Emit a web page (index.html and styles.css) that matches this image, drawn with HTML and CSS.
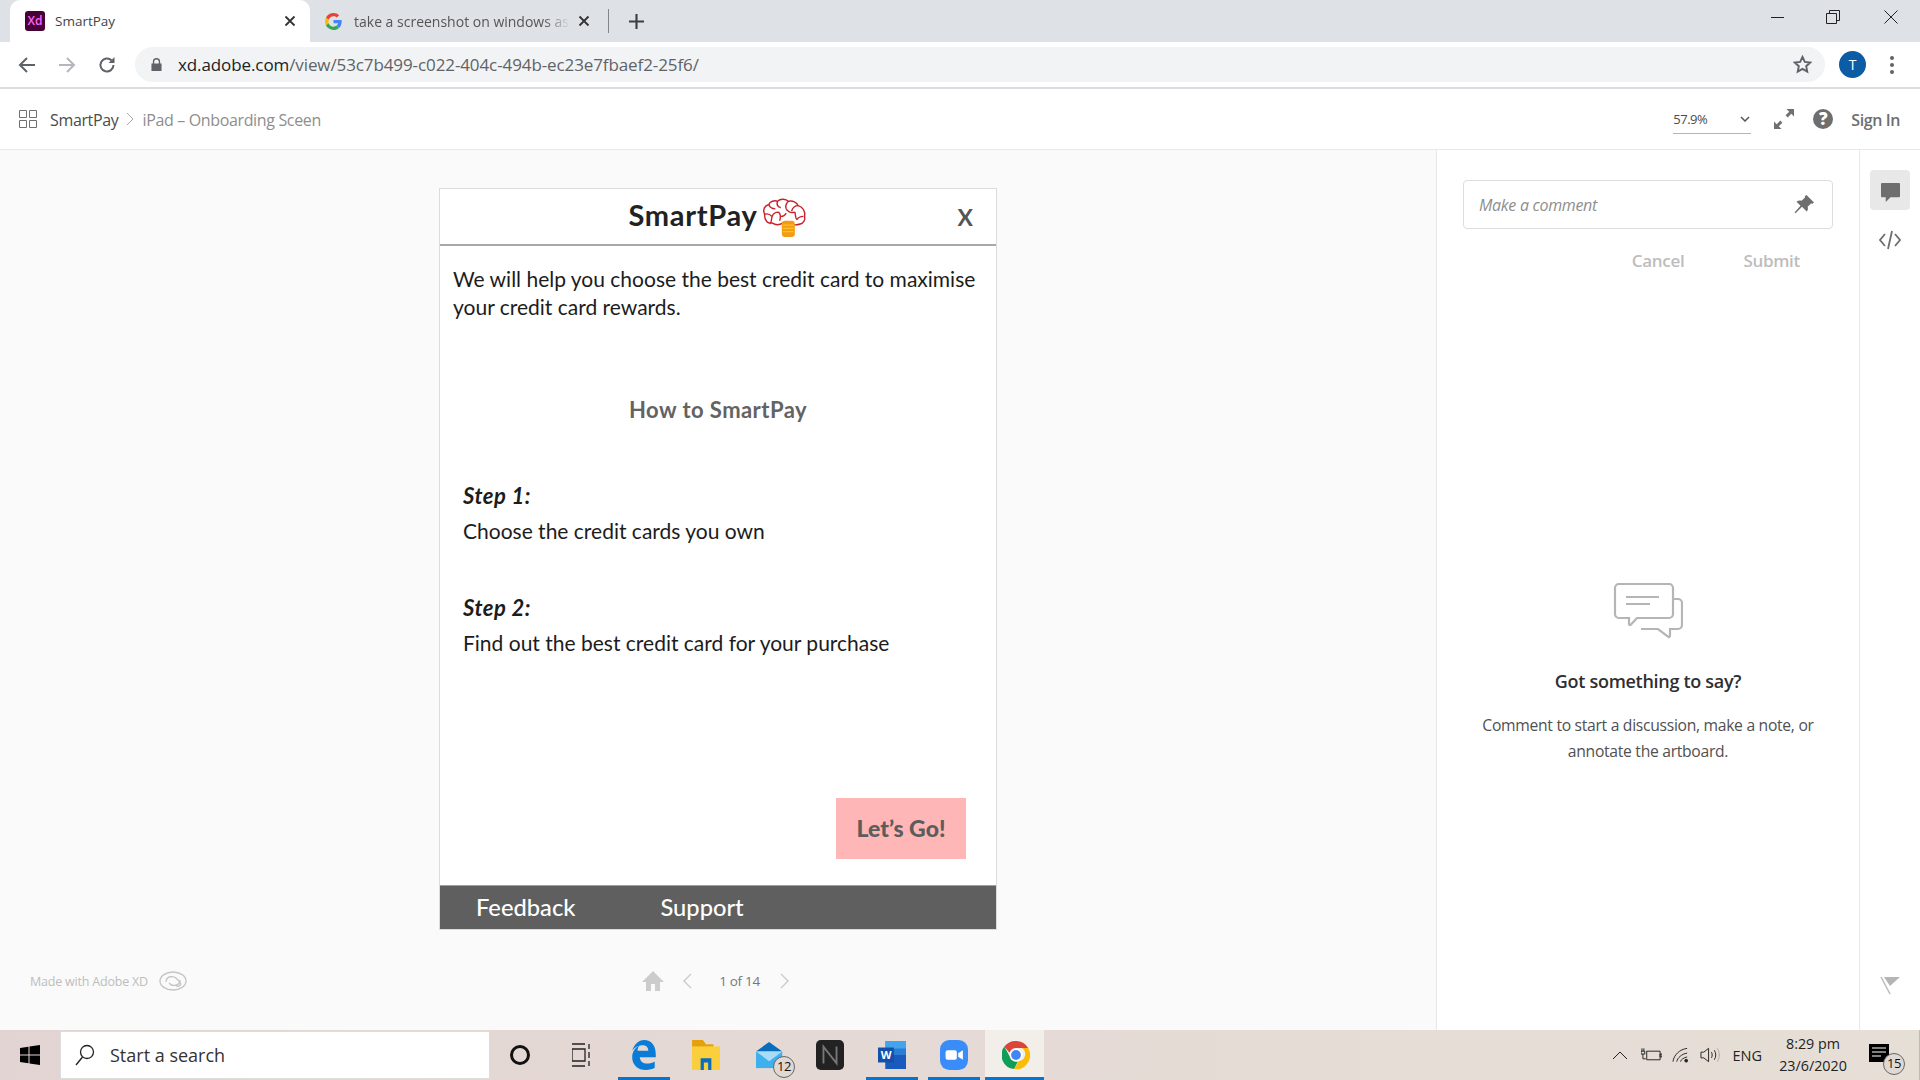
FILE: index.html
```html
<!DOCTYPE html>
<html lang="en">
<head>
    <meta charset="UTF-8">
    <title>SmartPay</title>
    <link rel="stylesheet" href="styles.css">
</head>
<body>
    <!-- browser tabs -->
    <div class="tabstrip">
        <div class="tab active">
            <span class="xd-icon">Xd</span>
            <span class="tab-title">SmartPay</span>
            <svg class="tab-close" viewBox="0 0 12 12"><path d="M1.5 1.5l9 9M10.5 1.5l-9 9"/></svg>
        </div>
        <div class="tab">
            <svg class="g-icon" viewBox="0 0 48 48">
                <path fill="#ea4335" d="M24 9.5c3.5 0 6.700 1.300 9.100 3.500l6.800-6.800C35.800 2.400 30.200 0 24 0 14.600 0 6.500 5.400 2.600 13.200l7.900 6.100C12.400 13.700 17.700 9.500 24 9.500z"/>
                <path fill="#4285f4" d="M47 24.500c0-1.600-.1-3.100-.4-4.500H24v9h12.900c-.6 3-2.200 5.500-4.700 7.200l7.600 5.900C44.300 37.900 47 31.800 47 24.500z"/>
                <path fill="#fbbc05" d="M10.500 28.700c-.5-1.500-.8-3-.8-4.700s.3-3.200.8-4.700l-7.900-6.100C.9 16.500 0 20.100 0 24s.9 7.500 2.600 10.800l7.900-6.100z"/>
                <path fill="#34a853" d="M24 48c6.500 0 11.900-2.100 15.800-5.800l-7.600-5.900c-2.100 1.400-4.900 2.300-8.200 2.300-6.300 0-11.600-4.200-13.500-9.900l-7.900 6.100C6.500 42.600 14.600 48 24 48z"/>
            </svg>
            <span class="tab-title fade">take a screenshot on windows as</span>
            <svg class="tab-close" viewBox="0 0 12 12"><path d="M1.5 1.5l9 9M10.5 1.5l-9 9"/></svg>
        </div>
        <span class="tab-sep"></span>
        <svg class="tab-new" viewBox="0 0 14 14"><path d="M7 0v14M0 7h14"/></svg>
        <div class="win-controls">
            <svg viewBox="0 0 14 14"><path d="M0 7.500h13"/></svg>
            <svg viewBox="0 0 14 14"><path d="M.5 3.500h10v10H.5zM3.500 3.500V.5h10v10h-3"/></svg>
            <svg viewBox="0 0 14 14"><path d="M.5.5l13 13M13.500.5l-13 13"/></svg>
        </div>
    </div>

    <!-- address bar -->
    <div class="toolbar">
        <svg class="nav-icon" viewBox="0 0 18 18"><path d="M17 9H2M9 2L2 9l7 7"/></svg>
        <svg class="nav-icon off" viewBox="0 0 18 18"><path d="M1 9h15M9 2l7 7-7 7"/></svg>
        <svg class="nav-icon" viewBox="0 0 18 18"><path d="M15.500 9a6.500 6.500 0 1 1-2-4.700"/><path class="solid" d="M16.500 1v6h-6z"/></svg>
        <div class="omnibox">
            <svg class="lock" viewBox="0 0 12 14"><path d="M2 6V4a4 4 0 0 1 8 0v2h1.500v8H.5V6zm1.500 0h5V4a2.500 2.500 0 0 0-5 0z"/></svg>
            <span class="url"><b>xd.adobe.com</b>/view/53c7b499-c022-404c-494b-ec23e7fbaef2-25f6/</span>
            <svg class="star" viewBox="0 0 18 18"><path d="M9 1.800l2.200 4.700 5.100.6-3.800 3.500 1 5.100L9 13.200l-4.500 2.500 1-5.100-3.800-3.500 5.100-.6z"/></svg>
        </div>
        <span class="avatar">T</span>
        <span class="kebab"><i></i><i></i><i></i></span>
    </div>

    <!-- xd header -->
    <div class="xdbar">
        <svg class="grid-icon" viewBox="0 0 18 18"><path d="M.5.5h7v7h-7zM10.500.5h7v7h-7zM.5 10.500h7v7h-7zM10.500 10.500h7v7h-7z"/></svg>
        <span class="crumb">SmartPay</span>
        <svg class="crumb-sep" viewBox="0 0 8 14"><path d="M1 1l6 6-6 6"/></svg>
        <span class="crumb dim">iPad – Onboarding Sceen</span>
        <div class="zoom-select">
            <span>57.9%</span>
            <svg viewBox="0 0 10 6"><path d="M1 1l4 4 4-4"/></svg>
        </div>
        <svg class="expand" viewBox="0 0 20 20"><path class="solid" d="M12.500 0H20v7.500l-2.700-2.700-3.600 3.600-2.100-2.100 3.600-3.600zM7.500 20H0v-7.500l2.700 2.700 3.600-3.600 2.100 2.100-3.600 3.600z"/></svg>
        <span class="help">?</span>
        <span class="signin">Sign In</span>
    </div>

    <div class="main">
        <!-- artboard -->
        <div class="stage">
            <div class="artboard">
                <div class="board-head">
                    <span class="logo-text">SmartPay</span>
                    <svg class="brain" viewBox="0 0 42 36">
                        <path d="M3 15c-2-4 0-8 4-9 1-3 5-4 8-3 3-3 8-2 10 0 4-1 8 1 9 4 4 1 7 5 6 10 1 3-1 6-4 7-3 1-6 1-8 0-3 1-6 0-8-1-3 2-7 2-10 0-4 1-7-2-7-8z"/>
                        <path d="M7 6c1 3 3 4 6 4M15 3c-1 3 0 5 3 6M25 3c-2 2-3 4-2 7M34 7c-3 0-5 2-6 5M3 15c3-1 5 0 7 2M10 17c1-3 3-4 6-4M16 13c2 2 2 5 1 8M23 10c2 3 5 4 8 3M31 13c1 3 0 5 2 7M39 17c-3 0-5 1-6 3M10 17c-1 3 0 5-2 7M23 14c-1 2-3 3-5 3"/>
                        <rect class="coin" x="19" y="21" width="12" height="15" rx="3"/>
                        <path class="coin-line" d="M20 25h10M20 28h10M20 31h10"/>
                    </svg>
                    <span class="board-close">X</span>
                </div>
                <div class="board-body">
                    <p class="intro">We will help you choose the best credit card to maximise your credit card rewards.</p>
                    <h2 class="how">How to SmartPay</h2>
                    <div class="step">
                        <em>Step 1:</em>
                        <span>Choose the credit cards you own</span>
                    </div>
                    <div class="step">
                        <em>Step 2:</em>
                        <span>Find out the best credit card for your purchase</span>
                    </div>
                    <div class="cta-row"><span class="cta">Let’s Go!</span></div>
                </div>
                <div class="board-foot">
                    <span class="foot-first">Feedback</span>
                    <span>Support</span>
                </div>
            </div>

            <div class="stage-foot">
                <div class="made">
                    <span>Made with Adobe XD</span>
                    <svg viewBox="0 0 28 20"><ellipse cx="14" cy="10" rx="13" ry="9"/><path d="M7 11c0-6 8-7 11-3l3 3c2 3-1 5-4 4M21 9c0 6-8 7-11 3"/></svg>
                </div>
                <div class="pager">
                    <svg class="home" viewBox="0 0 22 20"><path d="M11 0l11 11h-4v9h-5v-7H9v7H4v-9H0z"/></svg>
                    <svg class="arrow" viewBox="0 0 10 18"><path d="M9 1L1 9l8 8"/></svg>
                    <span class="count">1 of 14</span>
                    <svg class="arrow" viewBox="0 0 10 18"><path d="M1 1l8 8-8 8"/></svg>
                </div>
            </div>
        </div>

        <!-- comments -->
        <div class="comments">
            <div class="comment-box">
                <span>Make a comment</span>
                <svg viewBox="0 0 20 20"><path d="M12.500 0L20 7.500l-1.500 1.200-1.500-.3-3.300 3.300c.5 2 .2 3.500-1 4.800L8 11.800l-6.500 6.500-1-.8 6-6.800L2.500 6.800C4 5.500 5.800 5.300 7.600 5.800L11 2.500l-.2-1.300z"/></svg>
            </div>
            <div class="comment-actions">
                <span>Cancel</span>
                <span>Submit</span>
            </div>
            <div class="empty">
                <svg viewBox="0 0 70 56">
                    <path d="M6 1h50a4 4 0 0 1 4 4v26a4 4 0 0 1-4 4H24L18 41.500c-1 1-2 .5-2-.5v-6H6a4 4 0 0 1-4-4V5a4 4 0 0 1 4-4z"/>
                    <path d="M60 16h5a4 4 0 0 1 4 4v22a4 4 0 0 1-4 4h-8v6.500c0 1.500-1 2-2 1L45 46H28"/>
                    <path d="M13 14h33M13 21h24"/>
                </svg>
                <h3>Got something to say?</h3>
                <p>Comment to start a discussion, make a note, or annotate the artboard.</p>
            </div>
        </div>

        <div class="rail">
            <span class="rail-btn">
                <svg viewBox="0 0 20 20"><path d="M1 0h18a1 1 0 0 1 1 1v13a1 1 0 0 1-1 1H10l-5 5v-5H1a1 1 0 0 1-1-1V1a1 1 0 0 1 1-1z"/></svg>
            </span>
            <svg class="code" viewBox="0 0 22 20"><path d="M6 4l-5 6 5 6M16 4l5 6-5 6M13 1L9 19"/></svg>
            <svg class="flag" viewBox="0 0 20 20"><path class="solid" d="M4 1h16l-10 9z"/><path d="M1 1l9 17"/></svg>
        </div>
    </div>

    <!-- windows taskbar -->
    <div class="taskbar">
        <svg class="start" viewBox="0 0 20 20"><path d="M0 3l8.500-1.200v7.700H0zM9.500 1.600L20 0v9.500H9.500zM0 10.500h8.500v7.700L0 17zM9.500 10.500H20V20L9.500 18.400z"/></svg>
        <div class="search">
            <svg viewBox="0 0 20 22"><circle cx="12" cy="8" r="6.500"/><path d="M7.500 13L1 21"/></svg>
            <span>Start a search</span>
        </div>
        <div class="task-icons">
            <span class="task"><span class="cortana"></span></span>
            <span class="task">
                <svg class="taskview" viewBox="0 0 20 24"><path d="M0 1h13M0 23h13M0 6h13v12H0zM17 1v5M17 9v6M17 18v5"/></svg>
            </span>
            <span class="task on">
                <svg viewBox="0 0 24 28"><path fill="#0a7bd6" d="M12 0c7 0 11 5 11 14v2H8c.5 4 3 6 7 6 2.500 0 5-.7 7-2v6c-2 1.300-5 2-8 2C6 28 1 23 1 16 1 11 4 7 8 5c-1 1-2 3-2 5h10c0-3-2-5-5-5-3 0-7 1-10 5C3 4 7 0 12 0z"/></svg>
            </span>
            <span class="task">
                <svg viewBox="0 0 26 28"><path fill="#e5a00d" d="M0 0h10l3 4h7v6H0z"/><path fill="#fbcf3c" d="M0 6h26v22H0z"/><path fill="#0a6cbd" d="M8 28V17h10v11h-3v-7h-4v7z"/></svg>
            </span>
            <span class="task">
                <svg class="mail" viewBox="0 0 32 30"><path fill="#0a6cbd" d="M15 0l15 11H0z"/><path fill="#3fb0ee" d="M0 11h30v19H0z"/><path fill="#a9dcf7" d="M0 11l15 11 15-11z"/></svg>
                <span class="badge">12</span>
            </span>
            <span class="task">
                <svg viewBox="0 0 30 32"><rect width="30" height="32" rx="5" fill="#222"/><path d="M8 25V7l14 18V7" fill="none" stroke="#777" stroke-width="2"/></svg>
            </span>
            <span class="task on">
                <svg viewBox="0 0 30 30"><path fill="#2b7cd3" d="M8 0h22v30H8z"/><path fill="#185abd" d="M8 15h22v15H8z"/><path fill="#41a5ee" d="M8 0h22v8H8z"/><path fill="#1350a8" d="M0 7h17v16H0z"/><text x="3" y="19" class="word-w">W</text></svg>
            </span>
            <span class="task on">
                <svg viewBox="0 0 30 32"><rect width="30" height="32" rx="10" fill="#3a8df8"/><rect x="6" y="11" width="12" height="10" rx="2" fill="#fff"/><path d="M19.500 14l5-3v10l-5-3z" fill="#fff"/></svg>
            </span>
            <span class="task on chrome">
                <svg viewBox="0 0 30 30">
                    <path fill="#db4437" d="M15 0a15 15 0 0 1 13 7.500H15a7.500 7.500 0 0 0-7 5L2.500 6A15 15 0 0 1 15 0z"/>
                    <path fill="#0f9d58" d="M2.500 6L8 16a7.500 7.500 0 0 0 9 6l-4 8A15 15 0 0 1 2.500 6z"/>
                    <path fill="#fbbc05" d="M28 7.500A15 15 0 0 1 13 30l5-8.500a7.500 7.500 0 0 0 3-14z"/>
                    <circle cx="15" cy="15" r="6" fill="#4285f4" stroke="#fff" stroke-width="1.500"/>
                </svg>
            </span>
        </div>
        <div class="tray">
            <svg class="tray-chev" viewBox="0 0 16 9"><path d="M1 8l7-7 7 7"/></svg>
            <svg class="tray-bat" viewBox="0 0 22 14"><path d="M6 3h14v9H6zM20 6h2v3h-2zM3 0v3M1 0v3M0 3h4v3H0zM2 6v5h3"/></svg>
            <svg class="tray-wifi" viewBox="0 0 18 16"><path d="M1 15C2 8 8 2 16 1M5 15c1-4 5-8 11-9M9 15c.5-2 3-4 7-5"/><circle class="solid" cx="15" cy="14" r="1.500"/></svg>
            <svg class="tray-vol" viewBox="0 0 22 16"><path d="M1 5h3l5-4v14l-5-4H1zM12 5c1 2 1 4 0 6M15 3c2 3 2 7 0 10"/><path class="faint" d="M18 1c3 4 3 10 0 14"/></svg>
            <span class="tray-lang">ENG</span>
            <div class="clock">
                <span>8:29 pm</span>
                <span>23/6/2020</span>
            </div>
            <span class="notify">
                <svg viewBox="0 0 20 18"><path d="M0 0h20v18H0z"/><path class="note-line" d="M3 4h14M3 8h14M3 12h9"/></svg>
                <span class="badge">15</span>
            </span>
        </div>
    </div>
</body>
</html>
```

FILE: styles.css
```css
* {
    margin: 0;
    padding: 0;
    box-sizing: border-box;
}

body {
    width: 1920px;
    height: 1080px;
    overflow: hidden;
    display: flex;
    flex-direction: column;
    background: #fff;
    font-family: 'Open Sans', 'Noto Sans', sans-serif;
    color: #333;
}

svg {
    display: block;
    flex: none;
}

/* tabs */
.tabstrip {
    height: 42px;
    flex: none;
    display: flex;
    align-items: center;
    padding-left: 10px;
    background: #dee1e6;
}

.tab {
    width: 296px;
    height: 42px;
    display: flex;
    align-items: center;
    padding: 0 16px 0 15px;
    font-size: 13.5px;
    color: #555;
}

.tab.active {
    width: 300px;
    padding: 0 14px 0 15px;
    background: #fff;
    border-radius: 10px 10px 0 0;
    color: #444;
}

.xd-icon {
    width: 20px;
    height: 20px;
    margin-right: 10px;
    flex: none;
    border-radius: 3px;
    background: #470137;
    color: #ff61f6;
    font-size: 12px;
    font-weight: 600;
    line-height: 20px;
    text-align: center;
}

.g-icon {
    width: 17px;
    height: 17px;
    margin-right: 12px;
}

.tab-title {
    flex: 1;
    white-space: nowrap;
    overflow: hidden;
}

.tab-title.fade {
    font-size: 14px;
    -webkit-mask-image: linear-gradient(90deg, #000 88%, transparent);
    mask-image: linear-gradient(90deg, #000 88%, transparent);
}

.tab-close {
    width: 12px;
    height: 12px;
    margin-left: 8px;
    fill: none;
    stroke: #333;
    stroke-width: 1.8;
}

.tab-sep {
    width: 1px;
    height: 24px;
    margin-left: 2px;
    background: #80868b;
}

.tab-new {
    width: 15px;
    height: 15px;
    margin-left: 20px;
    fill: none;
    stroke: #3c4043;
    stroke-width: 2;
}

.win-controls {
    margin-left: auto;
    display: flex;
    gap: 44px;
    padding: 0 22px 8px 0;
}

.win-controls svg {
    width: 14px;
    height: 14px;
    fill: none;
    stroke: #222;
    stroke-width: 1;
}

.win-controls svg:first-child {
    margin-right: -3px;
}

/* address bar */
.toolbar {
    height: 47px;
    flex: none;
    display: flex;
    align-items: center;
    padding-left: 18px;
    background: #fff;
    border-bottom: 2px solid #dadce0;
}

.nav-icon {
    width: 18px;
    height: 18px;
    margin-right: 22px;
    fill: none;
    stroke: #5f6368;
    stroke-width: 2;
}

.nav-icon.off {
    stroke: #b4b7bb;
}

.nav-icon .solid {
    fill: #5f6368;
    stroke: none;
}

.omnibox {
    width: 1690px;
    height: 35px;
    margin-left: -3px;
    display: flex;
    align-items: center;
    padding: 0 13px 0 16px;
    background: #f1f3f4;
    border-radius: 18px;
}

.lock {
    width: 11px;
    height: 13px;
    margin-right: 16px;
    fill: #5f6368;
}

.url {
    flex: 1;
    font-size: 17px;
    letter-spacing: -.1px;
    color: #5f6368;
}

.url b {
    font-weight: 400;
    color: #202124;
}

.star {
    width: 19px;
    height: 19px;
    fill: none;
    stroke: #5f6368;
    stroke-width: 1.8;
}

.avatar {
    width: 27px;
    height: 27px;
    margin-left: 14px;
    border-radius: 50%;
    background: #0b5ca5;
    color: #fff;
    font-size: 14px;
    line-height: 27px;
    text-align: center;
}

.kebab {
    margin-left: 24px;
    display: flex;
    flex-direction: column;
    gap: 3px;
}

.kebab i {
    width: 4px;
    height: 4px;
    border-radius: 50%;
    background: #5f6368;
}

/* xd header */
.xdbar {
    height: 61px;
    flex: none;
    display: flex;
    align-items: center;
    padding: 0 20px 0 19px;
    background: #fff;
    border-bottom: 1px solid #e8e8e8;
}

.grid-icon {
    width: 18px;
    height: 18px;
    margin-right: 13px;
    fill: none;
    stroke: #707070;
}

.crumb {
    padding-top: 2px;
    font-size: 16px;
    letter-spacing: -.35px;
    color: #4b4b4b;
}

.crumb.dim {
    color: #8e8e8e;
}

.crumb-sep {
    width: 8px;
    height: 14px;
    margin: 0 8px;
    fill: none;
    stroke: #aaa;
}

.zoom-select {
    width: 78px;
    height: 30px;
    margin-left: auto;
    display: flex;
    align-items: center;
    justify-content: space-between;
    padding-right: 1px;
    border-bottom: 1px solid #b5b5b5;
    font-size: 13px;
    letter-spacing: -.5px;
    color: #4b4b4b;
}

.zoom-select svg {
    width: 10px;
    height: 6px;
    fill: none;
    stroke: #555;
    stroke-width: 1.5;
}

.expand {
    width: 20px;
    height: 20px;
    margin-left: 23px;
}

.solid {
    fill: #707070;
}

.help {
    width: 20px;
    height: 20px;
    margin-left: 19px;
    border-radius: 50%;
    background: #6e6e6e;
    color: #fff;
    font-size: 17px;
    font-weight: 800;
    line-height: 20px;
    text-align: center;
}

.signin {
    margin-left: 18px;
    padding-top: 2px;
    font-size: 16px;
    font-weight: 600;
    letter-spacing: -.4px;
    color: #6e6e6e;
}

/* main */
.main {
    flex: 1;
    min-height: 0;
    display: flex;
}

.stage {
    width: 1436px;
    display: flex;
    flex-direction: column;
    align-items: center;
    padding-top: 38px;
    background: #fafafa;
}

.artboard {
    width: 558px;
    height: 742px;
    display: flex;
    flex-direction: column;
    background: #fff;
    border: 1px solid #dcdcdc;
}

.board-head {
    height: 57px;
    flex: none;
    display: flex;
    align-items: center;
    justify-content: center;
    position: relative;
    padding-bottom: 3px;
    border-bottom: 2px solid #a8a8a8;
}

.logo-text {
    margin-top: -2px;
    font-family: 'Lato', sans-serif;
    font-size: 29px;
    font-weight: 700;
    letter-spacing: .7px;
    color: #222;
}

.brain {
    width: 46px;
    height: 39px;
    margin: 4px 0 0 4px;
    fill: none;
    stroke: #c8232c;
    stroke-width: 1.3;
}

.coin {
    fill: #f39c12;
    stroke: none;
}

.coin-line {
    stroke: #fbc02d;
    stroke-width: 1;
}

.board-close {
    position: absolute;
    right: 23px;
    top: 14px;
    font-family: 'Lato', sans-serif;
    font-size: 23px;
    font-weight: 700;
    color: #555;
}

.board-body {
    flex: 1;
    display: flex;
    flex-direction: column;
    font-family: 'Lato', sans-serif;
    font-size: 21px;
    color: #1c1c1c;
}

.intro {
    padding: 19px 13px 0 13px;
    line-height: 28px;
}

.how {
    margin-top: 75px;
    font-size: 22px;
    font-weight: 700;
    letter-spacing: .45px;
    line-height: 28px;
    text-align: center;
    color: #636363;
}

.step {
    display: flex;
    flex-direction: column;
    gap: 7px;
    padding-left: 23px;
    line-height: 28px;
    margin-top: 49px;
}

.how + .step {
    margin-top: 58px;
}

.step em {
    font-size: 22px;
    font-weight: 700;
    letter-spacing: .5px;
}

.cta-row {
    margin-top: auto;
    display: flex;
    justify-content: flex-end;
    padding: 0 30px 26px 0;
}

.cta {
    width: 130px;
    height: 61px;
    background: #ffb6b6;
    font-size: 23px;
    font-weight: 900;
    line-height: 60px;
    text-align: center;
    color: #5c5c5c;
}

.board-foot {
    height: 44px;
    flex: none;
    display: flex;
    align-items: center;
    padding: 0 0 2px 36px;
    background: #5f5f5f;
    border-top: 1px solid #a0a0a0;
    font-family: 'Lato', sans-serif;
    font-size: 23.7px;
    font-weight: 500;
    color: #fff;
}

.foot-first {
    margin-right: 85px;
}

.stage-foot {
    width: 100%;
    margin-top: 41px;
    display: grid;
    grid-template-columns: 1fr auto 1fr;
    align-items: center;
    padding-right: 5px;
}

.made {
    display: flex;
    align-items: center;
    gap: 11px;
    margin-left: 30px;
    font-size: 12.5px;
    letter-spacing: -.2px;
    color: #bdbdbd;
}

.made svg {
    width: 28px;
    height: 20px;
    fill: none;
    stroke: #c4c4c4;
    stroke-width: 1.3;
}

.pager {
    display: flex;
    align-items: center;
    color: #777;
    font-size: 13.5px;
}

.home {
    width: 22px;
    height: 20px;
    fill: #ccc;
}

.arrow {
    width: 9px;
    height: 16px;
    margin-left: 19px;
    fill: none;
    stroke: #c8c8c8;
    stroke-width: 1.5;
}

.count {
    margin: 0 20px 0 27px;
    letter-spacing: -.3px;
}

.pager .arrow:last-child {
    margin-left: 0;
}

/* comments */
.comments {
    width: 423px;
    display: flex;
    flex-direction: column;
    padding: 30px 26px 0 26px;
    border-left: 1px solid #e8e8e8;
    background: #fff;
}

.comment-box {
    height: 49px;
    display: flex;
    align-items: center;
    justify-content: space-between;
    padding: 1px 18px 0 15px;
    border: 1px solid #ddd;
    border-radius: 4px;
    font-size: 16px;
    font-style: italic;
    letter-spacing: -.3px;
    color: #8e8e8e;
}

.comment-box svg {
    width: 20px;
    height: 20px;
    fill: #6e6e6e;
}

.comment-actions {
    display: flex;
    justify-content: flex-end;
    gap: 59px;
    padding: 20px 33px 0 0;
    font-size: 17px;
    font-weight: 600;
    letter-spacing: -.3px;
    color: #bdbdbd;
}

.empty {
    margin-top: 311px;
    display: flex;
    flex-direction: column;
    align-items: center;
    text-align: center;
}

.empty svg {
    width: 70px;
    height: 56px;
    fill: none;
    stroke: #b5b5b5;
    stroke-width: 2.2;
}

.empty h3 {
    margin-top: 30px;
    font-size: 18px;
    font-weight: 600;
    letter-spacing: -.3px;
    color: #2f2f2f;
}

.empty p {
    width: 345px;
    margin-top: 19px;
    font-size: 15.7px;
    letter-spacing: -.3px;
    line-height: 26px;
    color: #505050;
}

.rail {
    flex: 1;
    display: flex;
    flex-direction: column;
    align-items: center;
    padding-top: 20px;
    border-left: 1px solid #e8e8e8;
    background: #fff;
}

.rail-btn {
    width: 40px;
    height: 40px;
    display: flex;
    align-items: center;
    justify-content: center;
    padding-top: 4px;
    border-radius: 4px;
    background: #e8e8e8;
}

.rail-btn svg {
    width: 19px;
    height: 19px;
    fill: #6e6e6e;
}

.code {
    width: 22px;
    height: 20px;
    margin-top: 20px;
    fill: none;
    stroke: #6e6e6e;
    stroke-width: 1.8;
}

.flag {
    width: 20px;
    height: 20px;
    margin-top: auto;
    margin-bottom: 34px;
    fill: none;
    stroke: #bbb;
    stroke-width: 1.5;
}

.flag .solid {
    fill: #b5b5b5;
    stroke: none;
}

/* taskbar */
.taskbar {
    height: 50px;
    flex: none;
    display: flex;
    align-items: center;
    background: linear-gradient(90deg, #e2d4d2 0%, #e5dad5 50%, #e6dfd6 100%);
}

.start {
    width: 20px;
    height: 20px;
    margin: 0 20px;
    fill: #000;
}

.search {
    width: 430px;
    height: 48px;
    display: flex;
    align-items: center;
    gap: 15px;
    padding-left: 14px;
    background: #fff;
    border: 1px solid #ddd;
    font-size: 18px;
    color: #333;
}

.search svg {
    width: 20px;
    height: 22px;
    fill: none;
    stroke: #222;
    stroke-width: 1.3;
}

.task-icons {
    height: 50px;
    display: flex;
    margin-left: -1px;
}

.task {
    width: 62px;
    height: 50px;
    display: flex;
    align-items: center;
    justify-content: center;
    position: relative;
}

.task svg {
    width: 28px;
    height: 30px;
}

.task .mail {
    margin-left: 3px;
}

/* running app underline */
.task.on::after {
    content: '';
    position: absolute;
    bottom: 0;
    left: 5px;
    right: 5px;
    height: 3px;
    background: #0a74cc;
}

.task.chrome {
    width: 59px;
    padding-left: 2px;
    background: #f2eeea;
}

.task.chrome::after {
    left: 0;
    right: 0;
}

.cortana {
    width: 20px;
    height: 20px;
    border: 3px solid #111;
    border-radius: 50%;
}

.task .taskview {
    width: 20px;
    height: 24px;
    fill: none;
    stroke: #222;
    stroke-width: 1.3;
}

.word-w {
    fill: #fff;
    font-size: 12px;
    font-weight: 700;
}

.badge {
    position: absolute;
    width: 22px;
    height: 22px;
    right: 4px;
    bottom: 2px;
    border: 1.5px solid #666;
    border-radius: 50%;
    background: #e0d8d4;
    color: #111;
    font-size: 13px;
    line-height: 19px;
    letter-spacing: -.5px;
    text-align: center;
}

.tray {
    margin-left: auto;
    display: flex;
    align-items: center;
    height: 50px;
    padding-right: 6px;
    border-right: 1px solid #bbb;
    color: #222;
}

.tray svg {
    fill: none;
    stroke: #222;
}

.tray-chev {
    width: 16px;
    height: 9px;
}

.tray-bat {
    width: 21px;
    height: 14px;
    margin-left: 13px;
}

.tray-wifi {
    width: 17px;
    height: 16px;
    margin-left: 10px;
}

.tray .tray-wifi .solid {
    fill: #222;
}

.tray-vol {
    width: 21px;
    height: 16px;
    margin-left: 11px;
}

.faint {
    stroke: #aaa;
}

.tray-lang {
    margin-left: 11px;
    font-size: 14.5px;
}

.clock {
    width: 72px;
    margin-left: 15px;
    display: flex;
    flex-direction: column;
    gap: 4px;
    font-size: 14.3px;
    line-height: 18px;
    text-align: center;
}

.notify {
    width: 44px;
    height: 50px;
    margin-left: 20px;
    display: flex;
    align-items: center;
    position: relative;
}

.notify svg {
    width: 20px;
    height: 18px;
    margin-top: -4px;
}

.tray .notify path {
    fill: #000;
    stroke: none;
}

.tray .notify .note-line {
    fill: none;
    stroke: #fff;
}

.notify .badge {
    right: 8px;
    bottom: 5px;
}
```
